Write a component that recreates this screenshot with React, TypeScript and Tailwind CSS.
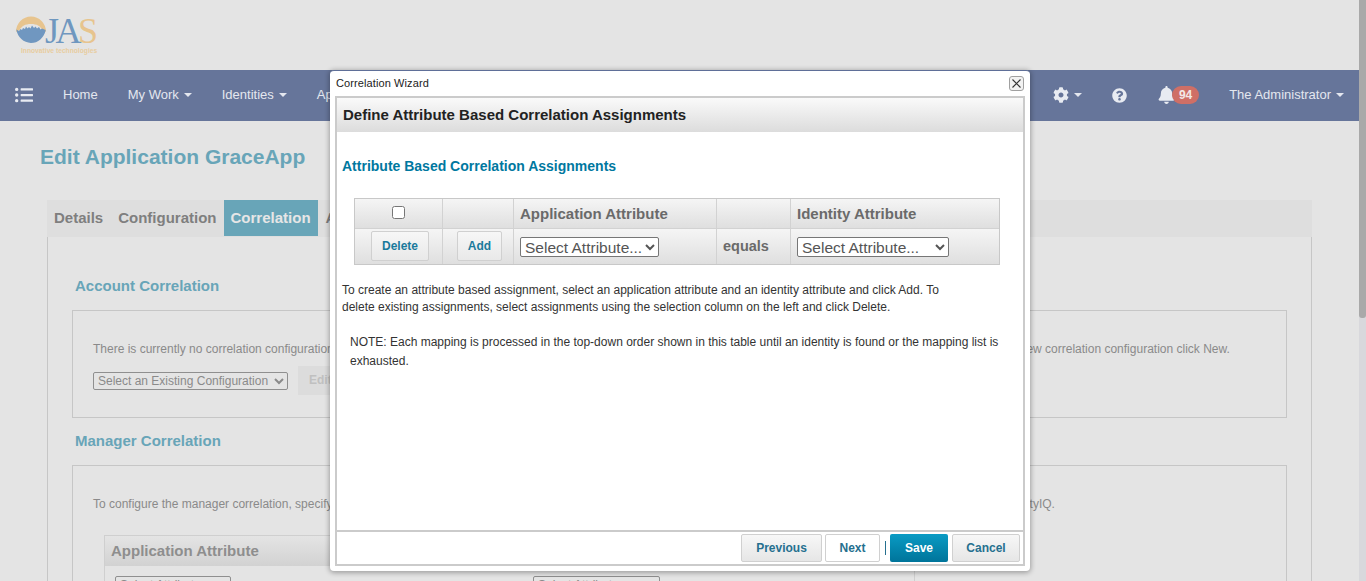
import { FaListUl, FaCog, FaQuestionCircle, FaBell } from "react-icons/fa";

const Caret = ({ cls = "border-t-[#e4e7ef]" }: { cls?: string }) => (
  <span className={`inline-block w-0 h-0 border-x-[4px] border-x-transparent border-t-[4px] ${cls}`} />
);

const Logo = () => (
  <div className="relative w-[82px] h-[42px] ml-[16px] mt-[15px]">
    <svg width="31" height="33" viewBox="0 0 31 33" className="absolute left-0 top-[1px]">
      <path d="M0 16 A15 15.5 0 0 1 30 16 L26.5 14 C24 10 21 8 15 8 C9 8 6 10 3.5 14 Z" fill="#e7c48e" />
      <path d="M0.3 13.5 L3 15 L4.5 13 L6 14 L7 12 L9 13 L10 10.5 L11.5 12.5 L13 11 L14.5 12.5 L16 9.5 L18 12 L19.5 10.5 L21 12.5 L23 11 L24.5 13.5 L26 12.5 L29.7 14 A15 16.5 0 0 1 0.3 13.5 Z" fill="#7097c0" />
    </svg>
    <span className="absolute left-[29px] top-[-4px] text-[36px] leading-[40px] text-[#6f97bf] [font-family:'Liberation_Serif',serif] tracking-[-3.5px]">JA<span className="text-[#e7c48e]">S</span></span>
    <span className="absolute left-[5px] top-[31px] text-[6.7px] leading-[10px] font-bold text-[#e8cda0] whitespace-nowrap">Innovative technologies</span>
  </div>
);

const NavItem = ({ label, caret, cls }: { label: string; caret?: boolean; cls: string }) => (
  <div className={`flex items-center gap-[5px] mb-[1px] text-[13px] text-[#e4e7ef] whitespace-nowrap ${cls}`}>
    {label}
    {caret && <Caret />}
  </div>
);

const Box = ({ children, cls }: { children: React.ReactNode; cls: string }) => (
  <div className={`border border-[#c6c6c6] ${cls}`}>{children}</div>
);

const Background = () => (
  <div className="w-[1359px] h-[581px] overflow-hidden bg-[#e4e4e4] shrink-0">
    <div className="h-[70px] flex items-start">
      <Logo />
    </div>
    <nav className="h-[51px] pb-[1px] bg-[#66759a] flex items-center relative">
      <FaListUl className="ml-[15px] text-[#e8ebf2] w-[18px] h-[18px]" />
      <NavItem label="Home" cls="ml-[30px]" />
      <NavItem label="My Work" caret cls="ml-[30px]" />
      <NavItem label="Identities" caret cls="ml-[30px]" />
      <NavItem label="Applications" caret cls="ml-[30px]" />
      <div className="ml-auto flex items-center">
        <FaCog className="text-[#e8ebf2] w-[16px] h-[16px]" />
        <span className="ml-[5px] flex"><Caret /></span>
        <FaQuestionCircle className="ml-[30px] text-[#e8ebf2] w-[15px] h-[15px]" />
        <span className="ml-[31px] relative flex items-center">
          <FaBell className="text-[#e8ebf2] w-[17px] h-[18px]" />
          <span className="ml-[-3px] w-[27px] h-[18px] rounded-full bg-[#cf6f66] text-[#f3e8e6] text-[12px] font-bold leading-[18px] text-center">94</span>
        </span>
        <span className="ml-[30px] mr-[15px] mb-[1px] flex items-center gap-[5px] text-[13px] text-[#e4e7ef]">The Administrator<Caret /></span>
      </div>
    </nav>
    <h1 className="ml-[40px] mt-[24px] text-[21px] leading-[24px] font-bold text-[#68a5b8]">Edit Application GraceApp</h1>
    <div className="ml-[47px] w-[1265px] mt-[31px]">
      <div className="h-[37px] bg-[#dedede] flex items-start text-[15px] leading-[18px] font-bold text-[#7f7f7f]">
        <span className="ml-[7px] mt-[9px]">Details</span>
        <span className="ml-[15px] mt-[9px]">Configuration</span>
        <span className="ml-[7px] h-[36px] px-[7px] pt-[9px] bg-[#68a5b8] text-[#e6e6e6]">Correlation</span>
        <span className="ml-[8px] mt-[9px]">Aggregation</span>
      </div>
      <div className="border-x border-[#c6c6c6] w-[1265px] h-[400px] pl-[24px] pr-[24px] pt-[39px]">
        <h2 className="text-[15px] leading-[20px] font-bold text-[#68a5b8] pl-[3px]">Account Correlation</h2>
        <Box cls="mt-[14px] h-[108px] w-[1215px] pl-[20px] pt-[30px] text-[12px] text-[#8a8a8a]">
          <p className="whitespace-nowrap leading-[16px]">There is currently no correlation configuration assigned to this application. To use an existing correlation configuration, select one from the list below and click Edit. To create a new correlation configuration click New.</p>
          <div className="flex items-center mt-[9px]">
            <select className="w-[195px] h-[18px] border border-[#8f8f8f] rounded-[2px] text-[12px] text-[#8a8a8a] bg-[#e4e4e4]">
              <option>Select an Existing Configuration</option>
            </select>
            <span className="ml-[10px] px-[11px] h-[29px] leading-[29px] bg-[#dcdcdc] font-bold text-[#c0c0c0]">Edit</span>
          </div>
        </Box>
        <h2 className="mt-[13px] text-[15px] leading-[20px] font-bold text-[#68a5b8] pl-[3px]">Manager Correlation</h2>
        <Box cls="mt-[14px] h-[200px] w-[1215px] pl-[20px] pt-[30px] text-[12px] text-[#8a8a8a]">
          <p className="whitespace-nowrap leading-[16px]">To configure the manager correlation, specify the application attribute that holds the manager value and the identity attribute used to look up the matching managers within IdentityIQ.</p>
          <div className="ml-[11px] mt-[23px] w-[811px] border border-[#cfcfcf]">
            <div className="h-[30px] bg-gradient-to-b from-[#e4e4e4] to-[#d2d2d2] pl-[6px] text-[15px] leading-[30px] font-bold text-[#8e8e8e]">Application Attribute</div>
            <div className="flex pl-[10px] pt-[10px]">
              <select className="w-[116px] h-[18px] border border-[#8f8f8f] rounded-[2px] bg-[#e4e4e4] text-[12px]"><option>Select Attribute...</option></select>
              <select className="ml-[302px] w-[127px] h-[18px] border border-[#8f8f8f] rounded-[2px] bg-[#e4e4e4] text-[12px]"><option>Select Attribute...</option></select>
            </div>
          </div>
        </Box>
      </div>
    </div>
  </div>
);

const cellGrad = "bg-gradient-to-b from-[#f5f5f5] to-[#dfdfdf]";

const SmallBtn = ({ label, cls }: { label: string; cls: string }) => (
  <button className={`h-[30px] border border-[#d0d0d0] rounded-[2px] bg-gradient-to-b from-[#f7f7f7] to-[#e9e9e9] text-[12px] font-bold text-[#1a7a9c] ${cls}`}>{label}</button>
);

const FootBtn = ({ label, cls }: { label: string; cls: string }) => (
  <button className={`h-[28px] border border-[#d0d0d0] rounded-[2px] text-[12px] font-bold text-[#26708f] ${cls}`}>{label}</button>
);

const Modal = () => (
  <div className="absolute left-[330px] top-[70px] w-[700px] h-[501px] bg-white rounded-[4px] border-t border-t-[#5f6f98] shadow-[0_1px_5px_1px_rgba(0,0,0,0.3)] flex flex-col px-[5px] pb-[5px]">
    <div className="h-[25px] flex items-center justify-between shrink-0 pl-[1px]">
      <span className="text-[11px] text-[#222] tracking-[0.1px]">Correlation Wizard</span>
      <span className="mr-[1px] w-[15px] h-[15px] border border-[#a0a0a0] rounded-[3px] bg-[#f2f2f2] flex items-center justify-center">
        <svg width="9" height="9" viewBox="0 0 9 9"><path d="M0.5 0.5 L8.5 8.5 M8.5 0.5 L0.5 8.5" stroke="#333" strokeWidth="1.1" /></svg>
      </span>
    </div>
    <div className="flex-1 border-2 border-[#cbcbcb] flex flex-col min-h-0">
      <div className="h-[34px] shrink-0 bg-gradient-to-b from-[#fafafa] to-[#dcdcdc] pl-[6px] text-[15px] leading-[34px] font-bold text-[#222]">Define Attribute Based Correlation Assignments</div>
      <div className="flex-1 min-h-0 pl-[5px]">
        <h3 className="pt-[25px] text-[14px] leading-[18px] font-bold text-[#00789f] box-content">Attribute Based Correlation Assignments</h3>
        <div className="ml-[12px] mt-[23px] w-[646px] border border-[#c8c8c8] grid grid-cols-[88px_71px_203px_74px_1fr] grid-rows-[30px_35px] text-[#6a6a6a]">
          <div className={`${cellGrad} border-r border-b border-[#d2d2d2] flex items-center justify-center pb-[2px]`}>
            <input type="checkbox" className="w-[13px] h-[13px] appearance-auto" />
          </div>
          <div className={`${cellGrad} border-r border-b border-[#d2d2d2]`} />
          <div className={`${cellGrad} border-r border-b border-[#d2d2d2] pl-[6px] text-[15px] leading-[30px] font-bold`}>Application Attribute</div>
          <div className={`${cellGrad} border-r border-b border-[#d2d2d2]`} />
          <div className={`${cellGrad} border-b border-[#d2d2d2] pl-[6px] text-[15px] leading-[30px] font-bold`}>Identity Attribute</div>
          <div className={`${cellGrad} border-r border-[#d2d2d2] flex items-center justify-center pl-[3px] pb-[1px]`}><SmallBtn label="Delete" cls="w-[58px]" /></div>
          <div className={`${cellGrad} border-r border-[#d2d2d2] flex items-center justify-center pl-[3px] pb-[1px]`}><SmallBtn label="Add" cls="w-[45px]" /></div>
          <div className={`${cellGrad} border-r border-[#d2d2d2] flex items-center pl-[6px]`}>
            <select className="w-[139px] h-[20px] border border-[#767676] rounded-[2px] bg-white text-[15.5px] leading-[18px] text-[#555]"><option>Select Attribute...</option></select>
          </div>
          <div className={`${cellGrad} border-r border-[#d2d2d2] flex items-center pl-[6px] text-[14.5px] font-bold`}>equals</div>
          <div className={`${cellGrad} flex items-center pl-[6px]`}>
            <select className="w-[152px] h-[20px] border border-[#767676] rounded-[2px] bg-white text-[15.5px] leading-[18px] text-[#555]"><option>Select Attribute...</option></select>
          </div>
        </div>
        <p className="mt-[17px] w-[610px] text-[12px] leading-[17px] text-[#333]">To create an attribute based assignment, select an application attribute and an identity attribute and click Add. To delete existing assignments, select assignments using the selection column on the left and click Delete.</p>
        <p className="ml-[8px] mt-[17px] w-[655px] text-[12px] leading-[19px] text-[#333]">NOTE: Each mapping is processed in the top-down order shown in this table until an identity is found or the mapping list is exhausted.</p>
      </div>
      <div className="h-[34px] shrink-0 border-t-2 border-[#cbcbcb] flex items-center justify-end pr-[3px]">
        <FootBtn label="Previous" cls="w-[81px] bg-gradient-to-b from-[#f7f7f7] to-[#e6e6e6]" />
        <FootBtn label="Next" cls="ml-[3px] w-[55px] bg-white" />
        <span className="ml-[5px] w-px h-[14px] bg-[#26708f]" />
        <button className="ml-[4px] w-[58px] h-[28px] rounded-[2px] bg-gradient-to-b from-[#0a9bc4] to-[#00749a] text-[12px] font-bold text-white">Save</button>
        <FootBtn label="Cancel" cls="ml-[4px] w-[68px] bg-gradient-to-b from-[#f7f7f7] to-[#e6e6e6]" />
      </div>
    </div>
  </div>
);

export default function App() {
  return (
    <div className="relative w-[1366px] h-[581px] overflow-hidden flex [font-family:'Liberation_Sans',Arial,sans-serif]">
      <Background />
      <div className="w-[7px] h-[581px] bg-[#d8d8dc] shrink-0">
        <div className="h-[318px] bg-[#a9a9a9] rounded-b-[3px]" />
      </div>
      <Modal />
    </div>
  );
}
